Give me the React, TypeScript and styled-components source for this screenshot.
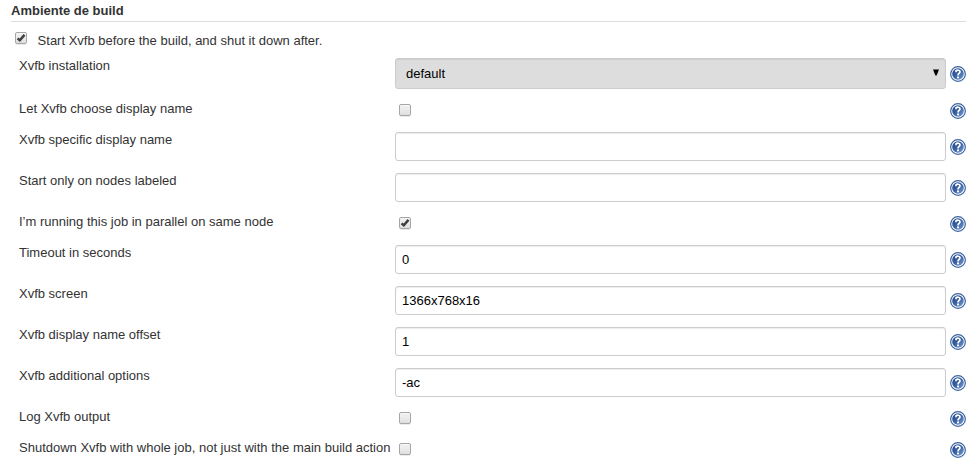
import React from 'react';
import styled, { createGlobalStyle } from 'styled-components';

const GlobalStyle = createGlobalStyle`
  * { box-sizing: border-box; }
  body {
    margin: 0;
    background: #fff;
    color: #333;
    font: 13px/15px "Liberation Sans", Arial, sans-serif;
  }
`;

const Section = styled.section`
  width: 979px;
  height: 468px;
  padding: 3px 13px 0 11px;
  overflow: hidden;
`;

const Heading = styled.h2`
  margin: 0;
  height: 19px;
  font-size: 13px;
  line-height: 15px;
  font-weight: bold;
  border-bottom: 1px solid #ddd;
`;

const ToggleRow = styled.label`
  display: flex;
  height: 36px;
  padding: 10px 0 0 4px;
`;

const ToggleText = styled.span`
  margin: 1px 0 0 10.6px;
`;

const rowHeights = { select: 43, text: 41, check: 31 };

type Kind = keyof typeof rowHeights;

const Row = styled.div<{ $kind: Kind }>`
  display: grid;
  grid-template-columns: 376px 551px 20px;
  padding-left: 8px;
  height: ${(p) => rowHeights[p.$kind]}px;
  align-items: start;
`;

const Label = styled.label`
  white-space: nowrap;
`;

const TextInput = styled.input`
  width: 551px;
  height: 29px;
  margin: 0;
  padding: 0 6px;
  border: 1px solid #ccc;
  border-radius: 3px;
  box-shadow: inset 0 1px 1px rgba(0, 0, 0, 0.075);
  background: #fff;
  color: #000;
  font: 13px "Liberation Sans", Arial, sans-serif;
  outline: none;
`;

const SelectBox = styled.div`
  display: flex;
  align-items: center;
  justify-content: space-between;
  width: 551px;
  height: 31px;
  padding: 0 6px 0 10px;
  border: 1px solid #ccc;
  border-radius: 3px;
  box-shadow: inset 0 1px 1px rgba(0, 0, 0, 0.075);
  background: #ddd;
  color: #000;
`;

const Arrow = styled.svg`
  display: block;
  width: 6px;
  height: 7px;
  margin-top: -3px;
`;

const CheckSlot = styled.div`
  padding: 3px 0 0 4px;
`;

const CheckBox = styled.span`
  display: block;
  flex: none;
  width: 12px;
  height: 12px;
  border: 1px solid #a6a6a6;
  border-radius: 2px;
  background: linear-gradient(#ededed 38%, #dedede);
  box-shadow: 0 1px 0 rgba(0, 0, 0, 0.08), inset 0 1px 1px rgba(255, 255, 255, 0.75);

  svg { display: block; width: 10px; height: 10px; }
`;

const helpOffsets = { select: 8, text: 7, check: 2 };

const HelpIcon = styled.svg<{ $kind: Kind }>`
  display: block;
  width: 16px;
  height: 16px;
  margin: ${(p) => helpOffsets[p.$kind]}px 0 0 4px;
`;

function Check({ checked }: { checked?: boolean }) {
  return (
    <CheckBox role="checkbox" aria-checked={!!checked}>
      {checked && (
        <svg viewBox="0 0 10 10">
          <path d="M1.6 5.3 3.8 7.3 8.5 1.9" fill="none" stroke="#3f3f3f" strokeWidth="2.5" />
        </svg>
      )}
    </CheckBox>
  );
}

function Help({ kind }: { kind: Kind }) {
  return (
    <HelpIcon $kind={kind} viewBox="0 0 16 16" role="img" aria-label="Help">
      <defs>
        <linearGradient id={`disc-${kind}`} x1="0" y1="0" x2="1" y2="1">
          <stop offset="0" stopColor="#1f4486" />
          <stop offset="0.5" stopColor="#3a63a4" />
          <stop offset="1" stopColor="#7fa3d4" />
        </linearGradient>
      </defs>
      <circle cx="8" cy="8" r="7.35" fill="#fff" stroke="#3c64a2" strokeWidth="1.2" />
      <circle cx="8" cy="8" r="5.8" fill={`url(#disc-${kind})`} />
      <path
        d="M6 6.3V4.9C7 3.9 10 3.8 10 5.8C10 7.4 8 7.5 8 9.4"
        fill="none"
        stroke="#fff"
        strokeWidth="1.7"
      />
      <rect x="7" y="10.5" width="2" height="1.8" fill="#fff" />
    </HelpIcon>
  );
}

interface Field {
  label: string;
  kind: Kind;
  value?: string;
  checked?: boolean;
}

const fields: Field[] = [
  { label: 'Xvfb installation', kind: 'select', value: 'default' },
  { label: 'Let Xvfb choose display name', kind: 'check' },
  { label: 'Xvfb specific display name', kind: 'text', value: '' },
  { label: 'Start only on nodes labeled', kind: 'text', value: '' },
  { label: 'I’m running this job in parallel on same node', kind: 'check', checked: true },
  { label: 'Timeout in seconds', kind: 'text', value: '0' },
  { label: 'Xvfb screen', kind: 'text', value: '1366x768x16' },
  { label: 'Xvfb display name offset', kind: 'text', value: '1' },
  { label: 'Xvfb additional options', kind: 'text', value: '-ac' },
  { label: 'Log Xvfb output', kind: 'check' },
  { label: 'Shutdown Xvfb with whole job, not just with the main build action', kind: 'check' },
];

function Control({ field }: { field: Field }) {
  if (field.kind === 'select') {
    return (
      <SelectBox>
        <span>{field.value}</span>
        <Arrow viewBox="0 0 6 7">
          <path d="M0 0.5H6L3.6 6.5H2.4Z" fill="#000" />
        </Arrow>
      </SelectBox>
    );
  }
  if (field.kind === 'text') {
    return <TextInput type="text" defaultValue={field.value} aria-label={field.label} />;
  }
  return (
    <CheckSlot>
      <Check checked={field.checked} />
    </CheckSlot>
  );
}

export default function App() {
  return (
    <>
      <GlobalStyle />
      <Section>
        <Heading>Ambiente de build</Heading>
        <ToggleRow>
          <Check checked />
          <ToggleText>Start Xvfb before the build, and shut it down after.</ToggleText>
        </ToggleRow>
        {fields.map((field) => (
          <Row key={field.label} $kind={field.kind}>
            <Label>{field.label}</Label>
            <Control field={field} />
            <Help kind={field.kind} />
          </Row>
        ))}
      </Section>
    </>
  );
}
